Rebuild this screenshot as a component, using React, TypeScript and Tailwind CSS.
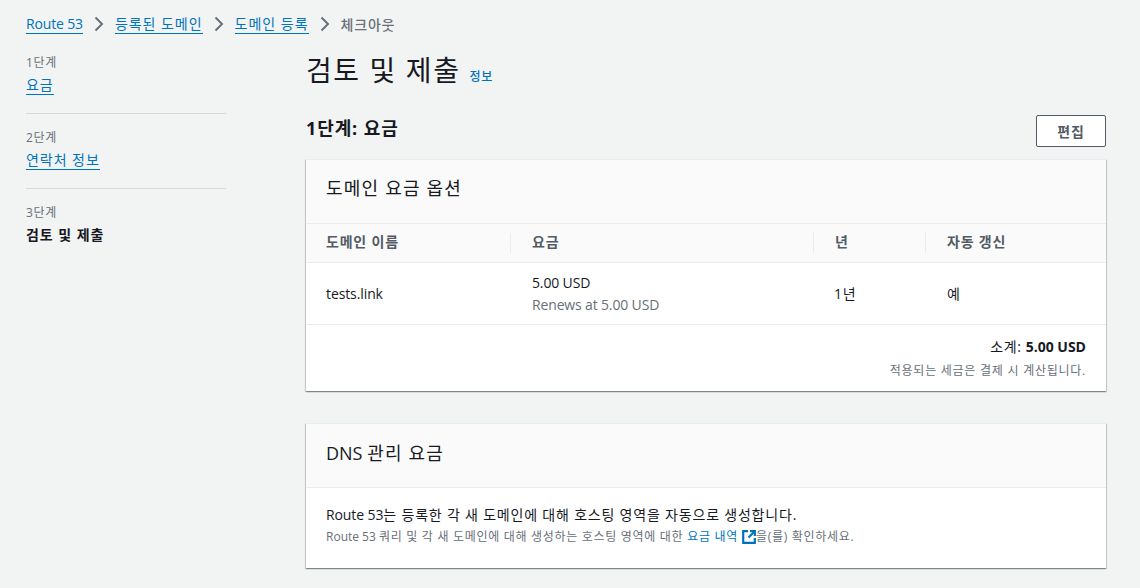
import React from "react";

const font = { fontFamily: '"Open Sans", "Noto Sans CJK KR", sans-serif' };

function Chevron() {
  return (
    <svg width="16" height="16" viewBox="0 0 16 16" fill="none" className="mx-[8px] shrink-0">
      <path d="M4.5 1.5 L11 8 L4.5 14.5" stroke="#687078" strokeWidth="2" />
    </svg>
  );
}

function Crumb({ children }: { children: React.ReactNode }) {
  return <a className="text-[#0073bb] border-b border-[#0073bb] leading-[18px]">{children}</a>;
}

function Step({ label, children, last }: { label: string; children: React.ReactNode; last?: boolean }) {
  return (
    <div className={last ? "pt-[16px]" : "pt-[16px] pb-[18px] border-b border-[#d5dbdb]"}>
      <div className="text-[12px] leading-[16px] text-[#687078] tracking-[0.7px]">{label}</div>
      <div className="mt-[4px] text-[14px] leading-[20px] tracking-[0.95px]">{children}</div>
    </div>
  );
}

function HeadCell({ w, children, first }: { w: string; children: React.ReactNode; first?: boolean }) {
  return (
    <div className={`${w} flex items-center h-[20px] pb-[3px] ${first ? "pl-[20px]" : "pl-[21px] border-l border-[#eaeded]"}`}>
      {children}
    </div>
  );
}

export default function App() {
  return (
    <div style={font} className="h-[588px] w-[1140px] overflow-hidden bg-[#f2f3f3] text-[14px] text-[#16191f]">
      <nav className="flex items-center pl-[26px] pt-[9px] h-[39px] text-[14px]">
        <Crumb><span className="tracking-[-0.15px]">Route 53</span></Crumb>
        <Chevron />
        <Crumb><span className="tracking-[0.95px]">등록된 도메인</span></Crumb>
        <Chevron />
        <Crumb><span className="tracking-[1px]">도메인 등록</span></Crumb>
        <Chevron />
        <span className="text-[#687078] font-medium tracking-[0.8px]">체크아웃</span>
      </nav>

      <div className="flex pl-[26px]">
        <aside className="w-[200px] mr-[80px] shrink-0">
          <Step label="1단계">
            <a className="text-[#0073bb] border-b border-[#0073bb]">요금</a>
          </Step>
          <Step label="2단계">
            <a className="text-[#0073bb] border-b border-[#0073bb]">연락처 정보</a>
          </Step>
          <Step label="3단계" last>
            <span className="font-bold">검토 및 제출</span>
          </Step>
        </aside>

        <main className="w-[800px] shrink-0">
          <div className="flex items-baseline pt-[13px] h-[53px]">
            <h1 className="text-[28px] leading-[36px] font-normal tracking-[1.6px]">검토 및 제출</h1>
            <a className="ml-[9px] text-[12px] font-medium text-[#0073bb] tracking-[0.7px]">정보</a>
          </div>

          <div className="flex items-center justify-between mt-[20px] h-[38px]">
            <h2 className="text-[18px] leading-[22px] font-bold mb-[6px] tracking-[0.9px]">1단계: 요금</h2>
            <button className="w-[70px] h-[32px] bg-white border border-[#545b64] rounded-[2px] text-[14px] font-bold text-[#545b64] tracking-[0.8px]">
              편집
            </button>
          </div>

          <section className="mt-[9px] bg-white shadow-[0_1px_1px_0_rgba(0,28,36,0.3),1px_1px_1px_0_rgba(0,28,36,0.15),-1px_1px_1px_0_rgba(0,28,36,0.15)] border-t border-[#eaeded]">
            <div className="h-[64px] flex items-center pl-[20px] pb-[6px] bg-[#fafafa] border-b border-[#eaeded] text-[18px] tracking-[1.2px]">
              도메인 요금 옵션
            </div>
            <div className="h-[39px] flex items-center bg-[#fafafa] border-b border-[#eaeded] font-semibold text-[#545b64] tracking-[0.8px]">
              <HeadCell w="w-[204px]" first>도메인 이름</HeadCell>
              <HeadCell w="w-[303px]">요금</HeadCell>
              <HeadCell w="w-[112px]">년</HeadCell>
              <HeadCell w="w-[181px]">자동 갱신</HeadCell>
            </div>
            <div className="h-[62px] flex items-center border-b border-[#eaeded]">
              <div className="w-[204px] pl-[20px] tracking-[-0.1px]">tests.link</div>
              <div className="w-[303px] pl-[22px] tracking-[-0.15px]">
                <div className="leading-[22px]">5.00 USD</div>
                <div className="leading-[22px] text-[#687078]">Renews at 5.00 USD</div>
              </div>
              <div className="w-[112px] pl-[21px]"><span className="tracking-[0.8px]">1년</span></div>
              <div className="w-[181px] pl-[22px]"><span className="tracking-[0.8px]">예</span></div>
            </div>
            <div className="h-[66px] pr-[20px] pt-[11px] text-right">
              <div className="leading-[22px]">
                <span className="tracking-[0.6px]">소계: </span><span className="font-bold">5.00 USD</span>
              </div>
              <div className="mt-[3px] text-[12px] leading-[20px] text-[#687078] tracking-[0.75px]">적용되는 세금은 결제 시 계산됩니다.</div>
            </div>
          </section>

          <section className="mt-[32px] bg-white shadow-[0_1px_1px_0_rgba(0,28,36,0.3),1px_1px_1px_0_rgba(0,28,36,0.15),-1px_1px_1px_0_rgba(0,28,36,0.15)] border-t border-[#eaeded]">
            <div className="h-[64px] flex items-center pl-[20px] pb-[4px] bg-[#fafafa] border-b border-[#eaeded] text-[18px]">
              DNS&nbsp;<span className="tracking-[1.2px]">관리 요금</span>
            </div>
            <div className="h-[80px] pl-[20px] pt-[16px]">
              <div className="leading-[22px]">
                <span className="tracking-[-0.1px]">Route 53</span><span className="tracking-[0.8px]">는 등록한 각 새 도메인에 대해 호스팅 영역을 자동으로 생성합니다.</span>
              </div>
              <div className="mt-[1px] flex items-center text-[12px] leading-[20px] text-[#687078]">
                Route 53&nbsp;
                <span className="tracking-[0.7px]">쿼리 및 각 새 도메인에 대해 생성하는 호스팅 영역에 대한&nbsp;</span>
                <a className="text-[#0073bb] tracking-[0.7px]">요금 내역</a>
                <svg width="14" height="14" viewBox="0 0 14 14" fill="none" className="ml-[4px]">
                  <path d="M6 1.2 H1.2 V12.8 H12.8 V8" stroke="#0073bb" strokeWidth="2.2" />
                  <path d="M8 1.2 H12.8 V6" stroke="#0073bb" strokeWidth="2.2" />
                  <path d="M12.5 1.5 L6.5 7.5" stroke="#0073bb" strokeWidth="2.2" />
                </svg>
                <span className="tracking-[0.7px]">을(를) 확인하세요.</span>
              </div>
            </div>
          </section>
        </main>
      </div>
    </div>
  );
}
